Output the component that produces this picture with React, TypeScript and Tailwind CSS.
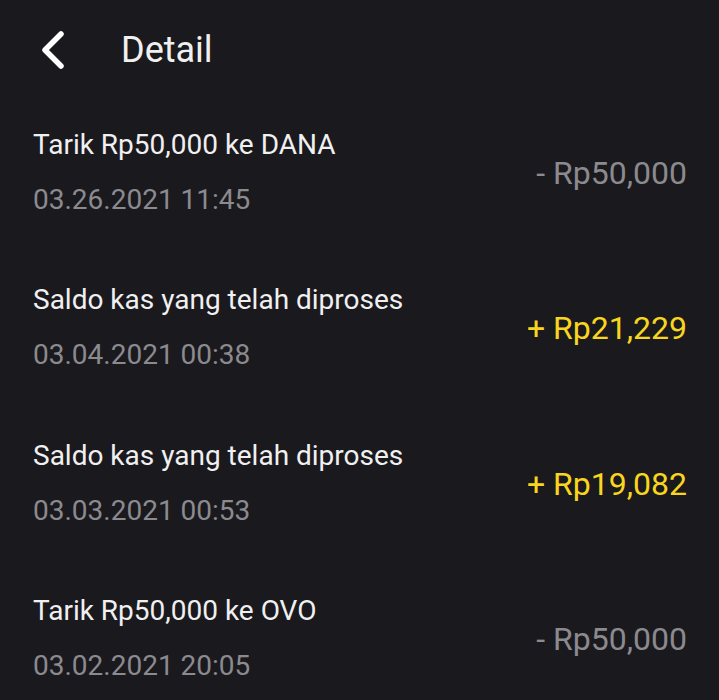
const rows = [
  { title: "Tarik Rp50,000 ke DANA", date: "03.26.2021 11:45", amount: "- Rp50,000", plus: false },
  { title: "Saldo kas yang telah diproses", date: "03.04.2021 00:38", amount: "+ Rp21,229", plus: true },
  { title: "Saldo kas yang telah diproses", date: "03.03.2021 00:53", amount: "+ Rp19,082", plus: true },
  { title: "Tarik Rp50,000 ke OVO", date: "03.02.2021 20:05", amount: "- Rp50,000", plus: false },
];

export default function App() {
  return (
    <div
      className="w-[719px] h-[700px] overflow-hidden bg-[#1a191e]"
      style={{ fontFamily: "Roboto, 'Noto Sans', sans-serif" }}
    >
      {/* Header */}
      <div className="h-[95px] pt-[5px] flex items-center">
        <svg width="30" height="40" viewBox="0 0 30 40" className="ml-[37px]">
          <path d="M24 4 L8 20 L24 36" fill="none" stroke="#ffffff" strokeWidth="5.5" strokeLinecap="round" strokeLinejoin="round" />
        </svg>
        <span className="ml-[54px] text-[36px] text-[#f0f0f0]">Detail</span>
      </div>

      {/* Transactions */}
      {rows.map((r, i) => (
        <div key={i} className="h-[155.5px] flex items-center justify-between pl-[33px] pr-[32px]">
          <div className="flex flex-col gap-[23px] mb-[1px]">
            <span className="text-[28px] leading-[32px] text-[#f0f0f0]">{r.title}</span>
            <span className="text-[28px] leading-[32px] text-[#8b8a8f]">{r.date}</span>
          </div>
          <span className={`text-[32px] leading-[32px] ${r.plus ? "text-[#f8d51e]" : "text-[#8b8a8f]"}`}>
            {r.amount}
          </span>
        </div>
      ))}
    </div>
  );
}
